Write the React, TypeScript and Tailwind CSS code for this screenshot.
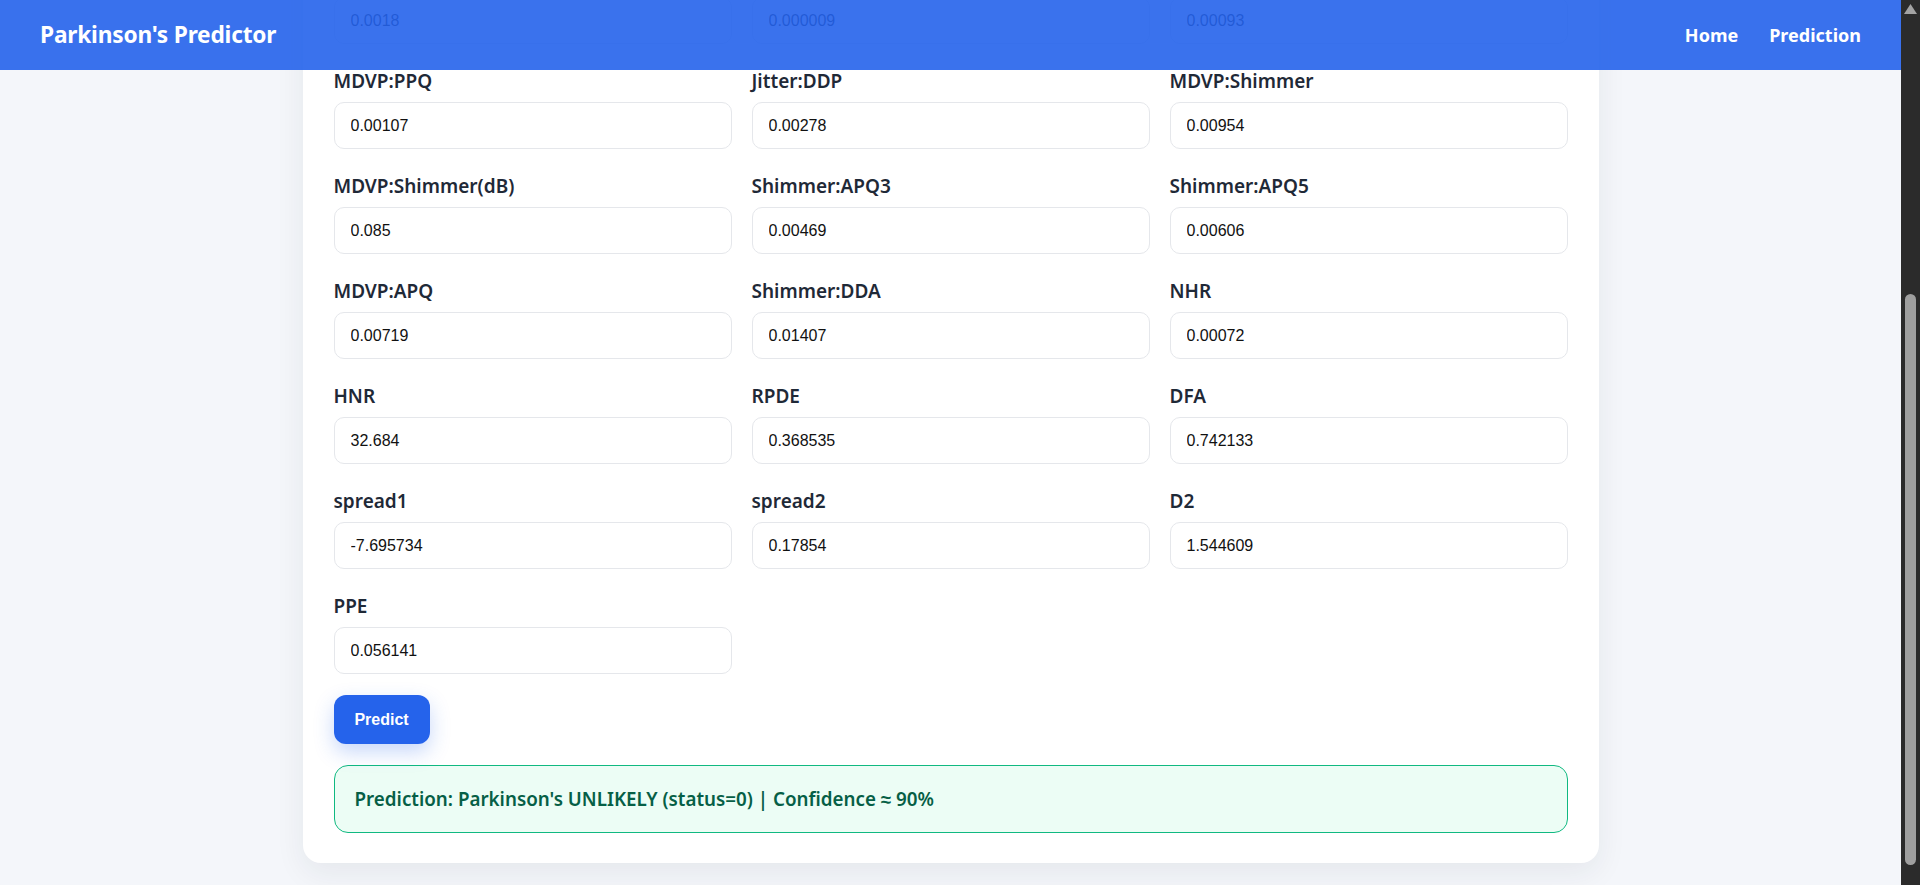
import React from "react";

const rows: [string, string][][] = [
  [
    ["MDVP:Jitter(%)", "0.0018"],
    ["MDVP:Jitter(Abs)", "0.000009"],
    ["MDVP:RAP", "0.00093"],
  ],
  [
    ["MDVP:PPQ", "0.00107"],
    ["Jitter:DDP", "0.00278"],
    ["MDVP:Shimmer", "0.00954"],
  ],
  [
    ["MDVP:Shimmer(dB)", "0.085"],
    ["Shimmer:APQ3", "0.00469"],
    ["Shimmer:APQ5", "0.00606"],
  ],
  [
    ["MDVP:APQ", "0.00719"],
    ["Shimmer:DDA", "0.01407"],
    ["NHR", "0.00072"],
  ],
  [
    ["HNR", "32.684"],
    ["RPDE", "0.368535"],
    ["DFA", "0.742133"],
  ],
  [
    ["spread1", "-7.695734"],
    ["spread2", "0.17854"],
    ["D2", "1.544609"],
  ],
  [["PPE", "0.056141"]],
];

const fields = rows.flat();

function Field({ label, value }: { label: string; value: string }) {
  return (
    <div className="flex flex-col">
      <label className="mb-[10px] text-[19px] leading-[22px] font-semibold text-[#1f2937] font-['Noto_Sans',sans-serif]">
        {label}
      </label>
      <input
        readOnly
        value={value}
        className="h-[47px] w-full rounded-[10px] border border-[#e5e7eb] bg-white px-4 text-[16px] text-[#111] outline-none font-['Liberation_Sans',Arial,sans-serif]"
      />
    </div>
  );
}

export default function App() {
  return (
    <div className="flex h-[885px] w-full overflow-hidden bg-[#f4f6fa]">
      <div className="relative flex-1 overflow-hidden">
        <header className="absolute inset-x-0 top-0 z-10 flex h-[70px] items-center justify-between bg-[#2563eb]/90 px-10 text-white font-['Noto_Sans',sans-serif]">
          <div className="text-[22.7px] font-bold tracking-[-0.2px]">Parkinson's Predictor</div>
          <nav className="flex gap-[31px] text-[18px] font-bold">
            <a>Home</a>
            <a>Prediction</a>
          </nav>
        </header>
        <div className="flex justify-center">
          <div className="mt-[-67px] w-[1296px] rounded-[18px] bg-white px-[31px] pt-8 pb-[30px] shadow-[0_10px_30px_rgba(30,41,59,0.07)]">
            <div className="grid grid-cols-3 gap-x-5 gap-y-[26px]">
              {fields.map(([l, v]) => (
                <Field key={l} label={l} value={v} />
              ))}
            </div>
            <button className="mt-[21px] h-[49px] w-[96px] rounded-xl bg-[#2563eb] text-[16px] font-bold text-white shadow-[0_8px_20px_rgba(37,99,235,0.25)] font-['Liberation_Sans',Arial,sans-serif]">
              Predict
            </button>
            <div className="mt-[21px] flex h-[68px] items-center rounded-[14px] border border-[#10b981] bg-[#ecfdf5] px-5 text-[18.8px] font-semibold text-[#065f46] font-['Noto_Sans',sans-serif]">
              Prediction: Parkinson's UNLIKELY (status=0) | Confidence ≈ 90%
            </div>
          </div>
        </div>
      </div>
      <div className="flex w-[19px] flex-col items-center bg-[#2b2b2b]">
        <svg width="13" height="10" viewBox="0 0 13 10" className="mt-1">
          <polygon points="6.5,0 13,10 0,10" fill="#a3a3a3" />
        </svg>
        <div className="mt-[280px] h-[571px] w-[11px] rounded-full bg-[#9f9f9f]" />
      </div>
    </div>
  );
}
